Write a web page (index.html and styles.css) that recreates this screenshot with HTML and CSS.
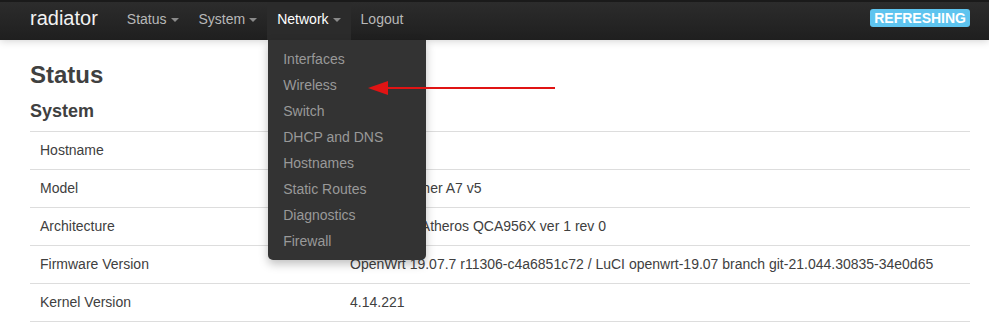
FILE: index.html
```html
<!DOCTYPE html>
<html lang="en">
<head>
<meta charset="utf-8">
<title>radiator - Status</title>
<link rel="stylesheet" href="styles.css">
</head>
<body>
<header class="navbar">
  <div class="nav-inner">
    <a class="brand">radiator</a>
    <ul class="nav">
      <li class="nav-item"><a>Status<span class="caret"></span></a></li>
      <li class="nav-item"><a>System<span class="caret"></span></a></li>
      <li class="nav-item open"><a>Network<span class="caret"></span></a>
        <ul class="dropdown">
          <li>Interfaces</li>
          <li>Wireless</li>
          <li>Switch</li>
          <li>DHCP and DNS</li>
          <li>Hostnames</li>
          <li>Static Routes</li>
          <li>Diagnostics</li>
          <li>Firewall</li>
        </ul>
      </li>
      <li class="nav-item"><a>Logout</a></li>
    </ul>
    <span class="badge">REFRESHING</span>
  </div>
</header>
<main class="container">
  <h2 class="title">Status</h2>
  <h3 class="section">System</h3>
  <table class="info">
    <tr><td class="key">Hostname</td><td>radiator</td></tr>
    <tr><td class="key">Model</td><td>TP-Link Archer A7 v5</td></tr>
    <tr><td class="key">Architecture</td><td>Qualcomm Atheros QCA956X ver 1 rev 0</td></tr>
    <tr><td class="key">Firmware Version</td><td>OpenWrt 19.07.7 r11306-c4a6851c72 / LuCI openwrt-19.07 branch git-21.044.30835-34e0d65</td></tr>
    <tr><td class="key">Kernel Version</td><td>4.14.221</td></tr>
  </table>
</main>
<svg class="annotation" width="192" height="18" viewBox="0 0 192 18">
  <line x1="18" y1="8" x2="189" y2="8" stroke="#e01414" stroke-width="2"/>
  <polygon points="2,8 22,1 22,15" fill="#e01414"/>
</svg>
</body>
</html>
```
FILE: styles.css
```css
* { box-sizing: border-box; }
html, body { margin: 0; padding: 0; }
body {
  font-family: "Liberation Sans", Arial, sans-serif;
  font-size: 14px;
  color: #404040;
  background: #fff;
  position: relative;
}
.navbar {
  height: 40px;
  background: linear-gradient(to bottom, #2c2c2c, #1f1f1f);
  border-top: 2px solid #1a1a1a;
  box-shadow: 0 1px 8px rgba(0,0,0,0.18);
  position: relative;
  z-index: 10;
}
.nav-inner {
  width: 940px;
  margin-left: 30px;
  display: flex;
  align-items: flex-start;
  height: 38px;
}
.brand {
  font-size: 20px;
  line-height: 20px;
  padding: 6px 0 12px;
  color: #f2f2f2;
  margin-right: 19px;
}
.nav {
  list-style: none;
  margin: 0;
  padding: 0;
  display: flex;
}
.nav-item { position: relative; }
.nav-item > a {
  display: flex;
  align-items: center;
  padding: 7px 10px 11px;
  line-height: 20px;
  height: 38px;
  color: #b8b8b8;
}
.nav-item.open > a {
  background: #2b2b2b;
  color: #fff;
}
.caret {
  display: inline-block;
  width: 0;
  height: 0;
  margin-left: 4px;
  margin-top: 2px;
  border-left: 4px solid transparent;
  border-right: 4px solid transparent;
  border-top: 4px solid #8a8a8a;
}
.dropdown {
  position: absolute;
  top: 38px;
  left: 1px;
  width: 158px;
  margin: 0;
  padding: 6px 0 6px;
  list-style: none;
  background: #333;
  border-radius: 0 0 5px 5px;
  box-shadow: 0 4px 10px rgba(0,0,0,0.25);
}
.dropdown li {
  padding: 0 15px;
  line-height: 26px;
  color: #999;
  white-space: nowrap;
}
.badge {
  margin-left: auto;
  margin-top: 7px;
  background: #5ec4ef;
  color: #fff;
  font-weight: bold;
  font-size: 14px;
  line-height: 18px;
  padding: 0 4px;
  border-radius: 3px;
}
.container {
  width: 940px;
  margin-left: 30px;
  padding-top: 17px;
}
.title {
  font-size: 24px;
  line-height: 36px;
  font-weight: bold;
  margin: 0 0 5px;
  color: #404040;
}
.section {
  font-size: 18px;
  line-height: 27px;
  font-weight: bold;
  margin: 0 0 6px;
  color: #404040;
}
.info {
  width: 100%;
  border-collapse: collapse;
  border-bottom: 1px solid #ddd;
}
.info td {
  border-top: 1px solid #ddd;
  padding: 10px;
  line-height: 17px;
  vertical-align: top;
}
.info td.key { width: 310px; }
.annotation {
  position: absolute;
  left: 366px;
  top: 80px;
  z-index: 20;
}
```
